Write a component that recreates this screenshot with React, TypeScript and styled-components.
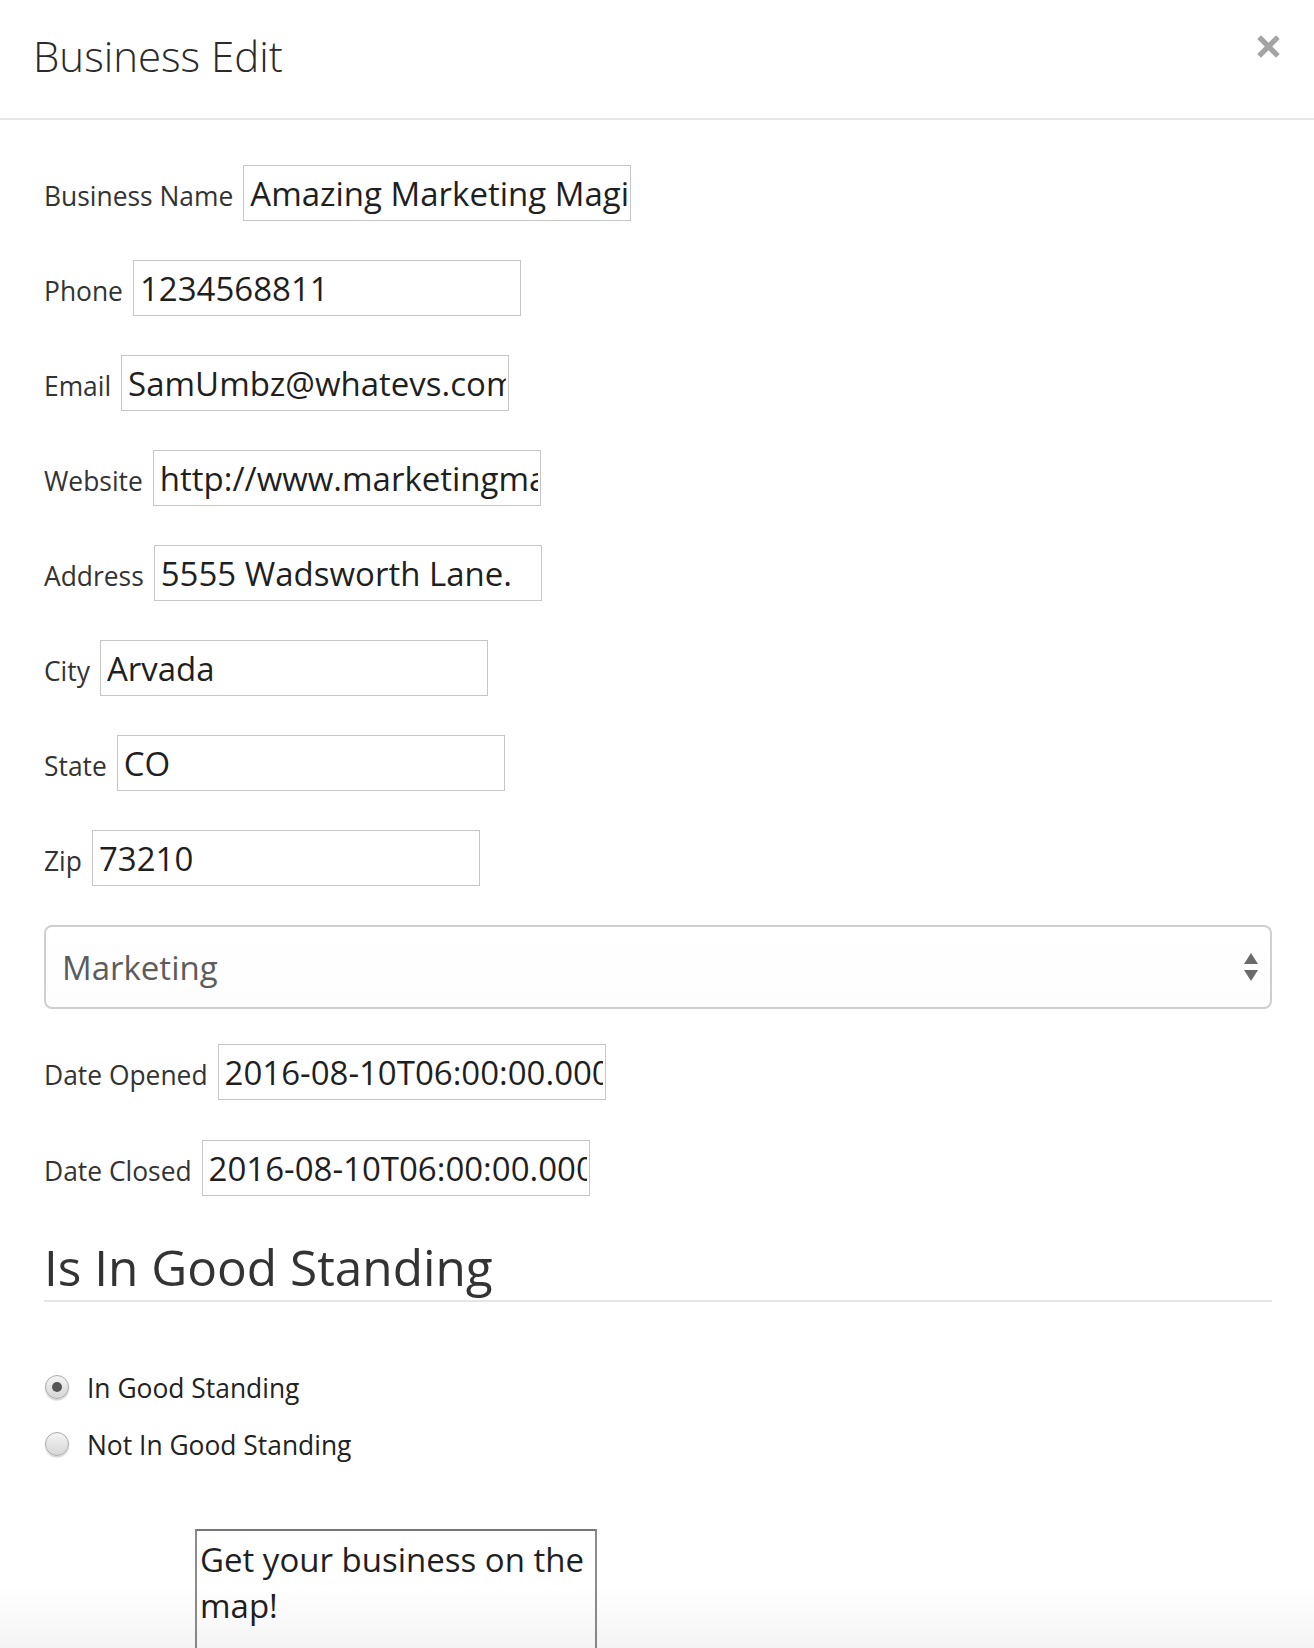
import styled, { createGlobalStyle } from "styled-components";

const GlobalStyle = createGlobalStyle`
  html, body {
    margin: 0;
    padding: 0;
    overflow: hidden;
    background: #ffffff;
  }
  body {
    font-family: "Open Sans", "Noto Sans", sans-serif;
    color: #333333;
  }
  * {
    box-sizing: border-box;
  }
`;

const Modal = styled.div`
  width: 1314px;
  height: 1648px;
  overflow: hidden;
`;

const Header = styled.div`
  display: flex;
  align-items: center;
  justify-content: space-between;
  height: 120px;
  padding: 0 33px 6px 33px;
  border-bottom: 2px solid #e5e5e5;
`;

const Title = styled.h4`
  margin: 0;
  font-size: 42px;
  font-weight: 300;
  color: #2a2a2a;
  line-height: 1;
`;

const CloseButton = styled.button`
  display: flex;
  align-items: center;
  justify-content: center;
  width: 25px;
  height: 25px;
  padding: 0;
  margin-top: -20px;
  border: none;
  background: none;
  cursor: pointer;
`;

const Body = styled.div`
  padding: 45px 42px 0 44px;
`;

const FieldRow = styled.div<{ $gap?: number }>`
  display: flex;
  align-items: baseline;
  gap: 10px;
  margin-bottom: ${(p) => p.$gap ?? 39}px;
`;

const Label = styled.label`
  font-size: 26.4px;
  color: #333333;
  white-space: nowrap;
`;

const TextInput = styled.input`
  width: 388px;
  height: 56px;
  padding: 0 2px 0 6px;
  border: 1px solid #c6c6c6;
  border-radius: 0;
  font-family: "Open Sans", "Noto Sans", sans-serif;
  font-size: 33px;
  color: #1f1f1f;
  background: #ffffff;
  outline: none;
`;

const SelectBox = styled.div`
  display: flex;
  align-items: center;
  justify-content: space-between;
  height: 84px;
  padding: 0 11px 0 16px;
  margin-bottom: 35px;
  border: 2px solid #cfcfcf;
  border-radius: 8px;
  background: linear-gradient(#ffffff, #fdfdfd);
  font-size: 33px;
  color: #5c5c5c;
`;

const SectionHeading = styled.h3`
  margin: 44px 0 0;
  padding-bottom: 6px;
  border-bottom: 2px solid #e6e6e6;
  font-size: 49.5px;
  font-weight: 400;
  line-height: 1.1;
  color: #333333;
`;

const RadioGroup = styled.div`
  display: flex;
  flex-direction: column;
  gap: 17px;
  margin-top: 66px;
`;

const RadioRow = styled.label`
  display: flex;
  align-items: center;
  gap: 18px;
  height: 40px;
  margin-left: 1px;
  font-size: 26.4px;
  color: #222222;
`;

const RadioDot = styled.span<{ $checked?: boolean }>`
  display: flex;
  align-items: center;
  justify-content: center;
  width: 24px;
  height: 24px;
  margin-top: -3px;
  border-radius: 50%;
  border: 1px solid #aaaaaa;
  background: linear-gradient(#f4f4f4, #d6d6d6);
  box-shadow: 0 1.5px 1.5px rgba(0, 0, 0, 0.18);

  &::after {
    content: "";
    display: ${(p) => (p.$checked ? "block" : "none")};
    width: 10px;
    height: 10px;
    border-radius: 50%;
    background: #555555;
  }
`;

const Description = styled.textarea`
  display: block;
  width: 402px;
  height: 220px;
  margin: 64px 0 0 151px;
  padding: 6px 3px;
  border: 2px solid #8c8c8c;
  border-top-color: #757575;
  font-family: "Open Sans", "Noto Sans", sans-serif;
  font-size: 33px;
  line-height: 46px;
  color: #1f1f1f;
  resize: none;
  outline: none;
`;

const BottomFade = styled.div`
  position: fixed;
  left: 0;
  right: 0;
  bottom: 0;
  height: 62px;
  background: linear-gradient(rgba(0, 0, 0, 0), rgba(0, 0, 0, 0.045));
  pointer-events: none;
`;

const fields = [
  { label: "Business Name", value: "Amazing Marketing Magic" },
  { label: "Phone", value: "1234568811" },
  { label: "Email", value: "SamUmbz@whatevs.com" },
  { label: "Website", value: "http://www.marketingmagic.com" },
  { label: "Address", value: "5555 Wadsworth Lane." },
  { label: "City", value: "Arvada" },
  { label: "State", value: "CO" },
  { label: "Zip", value: "73210" },
];

const CloseIcon = () => (
  <svg width="25" height="25" viewBox="0 0 24 24">
    <path d="M3 3 L21 21 M21 3 L3 21" stroke="#a4a4a4" strokeWidth="5" strokeLinecap="butt" />
  </svg>
);

const SelectArrows = () => (
  <svg width="16" height="30" viewBox="0 0 16 30">
    <path d="M8 1 L15 12 L1 12 Z" fill="#6a6a6a" />
    <path d="M1 18 L15 18 L8 29 Z" fill="#6a6a6a" />
  </svg>
);

const App = () => {
  return (
    <Modal>
      <GlobalStyle />
      <Header>
        <Title>Business Edit</Title>
        <CloseButton aria-label="Close">
          <CloseIcon />
        </CloseButton>
      </Header>
      <Body>
        {fields.map((f) => (
          <FieldRow key={f.label}>
            <Label>{f.label}</Label>
            <TextInput type="text" defaultValue={f.value} />
          </FieldRow>
        ))}
        <SelectBox>
          <span>Marketing</span>
          <SelectArrows />
        </SelectBox>
        <FieldRow $gap={40}>
          <Label>Date Opened</Label>
          <TextInput type="text" defaultValue="2016-08-10T06:00:00.000Z" />
        </FieldRow>
        <FieldRow $gap={0}>
          <Label>Date Closed</Label>
          <TextInput type="text" defaultValue="2016-08-10T06:00:00.000Z" />
        </FieldRow>
        <SectionHeading>Is In Good Standing</SectionHeading>
        <RadioGroup>
          <RadioRow>
            <RadioDot $checked />
            In Good Standing
          </RadioRow>
          <RadioRow>
            <RadioDot />
            Not In Good Standing
          </RadioRow>
        </RadioGroup>
        <Description defaultValue="Get your business on the map!" />
      </Body>
      <BottomFade />
    </Modal>
  );
};

export default App;
